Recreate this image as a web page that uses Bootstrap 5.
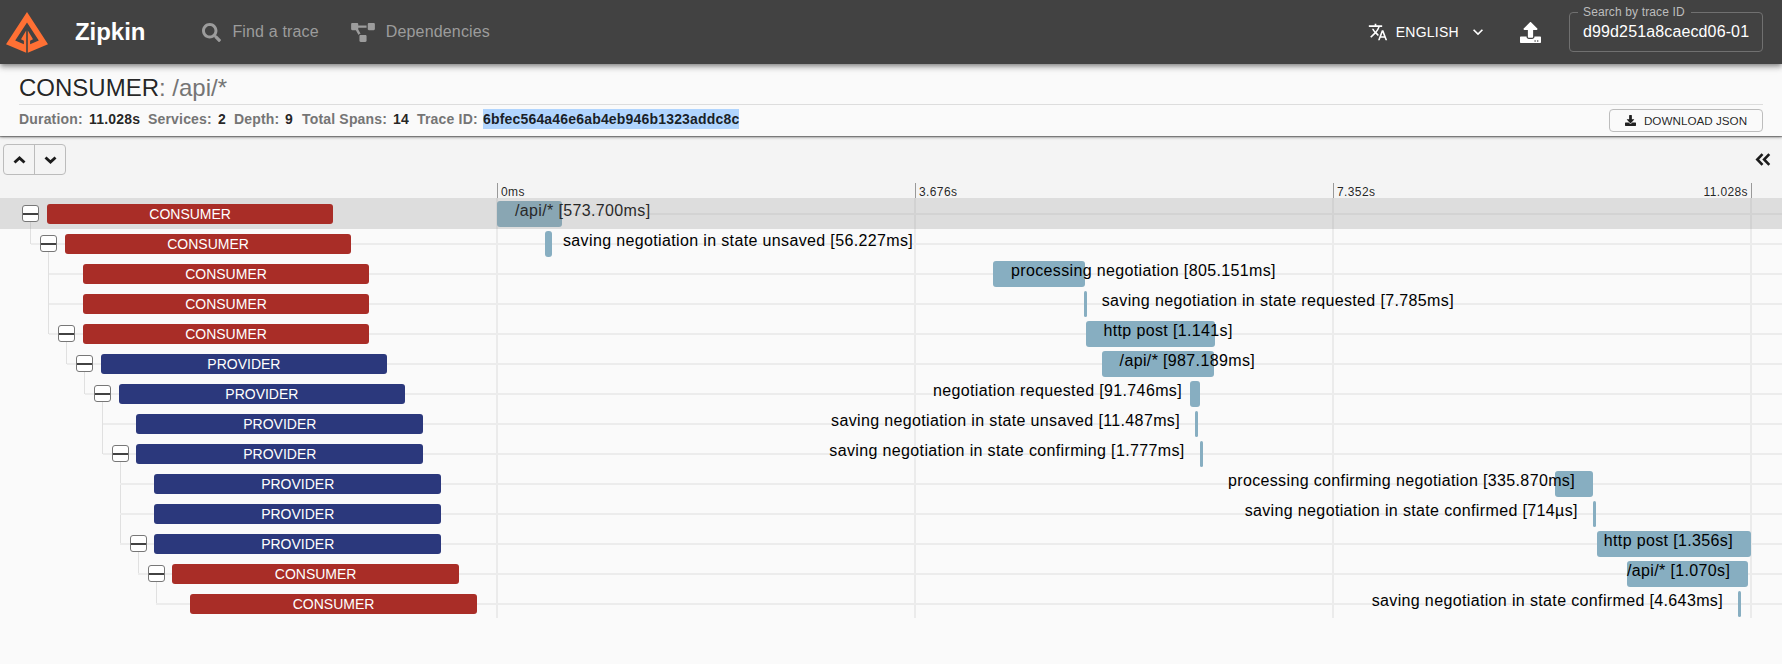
<!DOCTYPE html>
<html lang="en">
<head>
<meta charset="utf-8">
<title>Zipkin</title>
<link href="https://cdn.jsdelivr.net/npm/bootstrap@5.3.0/dist/css/bootstrap.min.css" rel="stylesheet">
<style>
  body { font-family: "Liberation Sans", Arial, sans-serif; background: #fafafa; color: rgba(0,0,0,.87); height: 664px; overflow: hidden; }
  .topbar { height: 64px; background: #424242; color: #fff; box-shadow: 0 2px 4px -1px rgba(0,0,0,.3), 0 4px 5px rgba(0,0,0,.18), 0 1px 10px rgba(0,0,0,.14); position: relative; z-index: 3; padding: 0 19px 0 5px; }
  .brand { font-size: 24px; font-weight: 700; margin-left: 26px; line-height: 64px; letter-spacing: -.05px; }
  .menu-item { color: #9c9c9c; font-size: 16px; letter-spacing: .16px; margin-left: 57px; }
  .lang { font-size: 14px; letter-spacing: .27px; margin: 0 9px 0 8px; }
  .upload { margin: 0 28px 0 32px; }
  .trace-field { width: 194px; height: 40px; border: 1px solid #707070; border-radius: 4px; position: relative; padding-left: 13px; font-size: 16px; letter-spacing: .13px; line-height: 38px; white-space: nowrap; }
  .trace-field span { position: absolute; top: -9px; left: 8px; background: #424242; padding: 0 6px 0 5px; font-size: 12px; letter-spacing: .13px; line-height: 16px; color: #bdbdbd; }
  .summary { height: 72px; background: #fafafa; padding: 0 19px; position: relative; z-index: 2; box-shadow: 0 1px 3px rgba(0,0,0,.45), 0 1px 1px rgba(0,0,0,.3); }
  .trace-title { height: 41px; border-bottom: 1px solid #ddd; font-size: 24px; line-height: 47px; }
  .trace-title span, .meta b { color: #757575; }
  .meta { font-size: 14px; font-weight: 700; line-height: 20px; letter-spacing: .18px; }
  .picked { background: #b1d5fe; }
  .download { width: 154px; height: 23px; border: 1px solid #bdbdbd; border-radius: 4px; font-size: 11.7px; line-height: 21px; white-space: nowrap; }
  .tools { height: 62px; background: #f4f4f4; }
  .updown { width: 63px; height: 31px; border: 1px solid #bcbcbc; border-radius: 4px; margin: 8px 0 0 3px; }
  .updown div { width: 31px; }
  .updown div + div { border-left: 1px solid #bcbcbc; }
  .axis { margin: 8px 0 0 497px; width: 1255px; height: 15px; font-size: 12px; line-height: 18px; letter-spacing: .38px; }
  .axis div { width: 418px; border-left: 1px solid #999; padding-left: 3px; flex: none; }
  .axis div:last-child { border-right: 1px solid #999; width: 419px; padding-right: 3px; }
  .timeline { padding-top: 1px; }
  .trow { height: 30px; position: relative; --left: calc(30.8px + var(--d) * 17.93px); }
  .trow::before { content: ""; position: absolute; height: 2px; top: 14px; right: 0; left: calc(var(--left) - 17.93px); background: #ececec; }
  .trow.first::before { left: 497px; }
  .trow.first::after { content: ""; position: absolute; inset: -1px 0 0 0; height: 31px; background: rgba(145,145,145,.27); }
  .service { position: absolute; left: calc(var(--left) + 16px); top: 5px; width: 286.700px; height: 20px; border-radius: 3px; color: #fff; background: #a92d27; text-align: center; font-size: 14px; line-height: 20px; z-index: 1; }
  .service.prov { background: #2b387c; }
  .toggler { position: absolute; left: calc(var(--left) - 8.6px); top: 6px; width: 17px; height: 17px; border: 1px solid #777; border-radius: 3px; background: linear-gradient(#424242,#424242) 0 7px/15px 2px no-repeat #fff; z-index: 1; }
  .stem { position: absolute; left: calc(var(--left) - .6px); top: 15px; width: 1px; height: calc(var(--n) * 30px); background: #e0e0e0; }
  .span-bar { position: absolute; top: 2px; height: 26px; left: var(--x); width: var(--w); border-radius: 3px; background: #87aec1; }
  .span-text { position: absolute; top: -1px; line-height: 25px; white-space: nowrap; font-size: 16px; letter-spacing: .36px; color: #000; left: calc(var(--x) + 18px); }
  .span-text.end { left: auto; right: calc(1782px - var(--x) - var(--w) + 18px); }
  .vlines { position: absolute; top: 0; left: 496px; width: 1256px; height: 420px; background: repeating-linear-gradient(90deg, #ebebeb 0 2px, transparent 2px 418px); }
</style>
</head>
<body>
<nav class="topbar d-flex align-items-center">
  <svg width="44" height="42" viewBox="0 0 44 42"><path fill="#ff7034" d="M22 1 1 33.200l20.200 8.500V19.500l-5.200 8.700 2.900 1.500v3.600L10.200 29.500 22 11.500 33.800 29.500 25.100 33.300v-3.600l2.900-1.500-5.200-8.700v22.200L43 33.200z"/></svg>
  <div class="brand">Zipkin</div>
  <div class="menu-item d-flex align-items-center">
    <svg width="19" height="19" viewBox="0 0 512 512" fill="currentColor"><path d="M505 442.700 405.300 343c-4.500-4.500-10.600-7-17-7H372c27.600-35.300 44-79.700 44-128C416 93.100 322.900 0 208 0S0 93.100 0 208s93.100 208 208 208c48.300 0 92.700-16.400 128-44v16.300c0 6.400 2.500 12.500 7 17l99.700 99.700c9.400 9.400 24.600 9.400 33.900 0l28.300-28.300c9.400-9.400 9.400-24.600.1-34zM208 336c-70.700 0-128-57.200-128-128 0-70.700 57.200-128 128-128 70.700 0 128 57.200 128 128 0 70.700-57.200 128-128 128z"/></svg>
    <span style="margin-left:11px">Find a trace</span>
    <svg width="24" height="19" viewBox="0 0 640 512" fill="currentColor" style="margin-left:32px"><path d="M384 320H256c-17.670 0-32 14.330-32 32v128c0 17.670 14.330 32 32 32h128c17.670 0 32-14.330 32-32V352c0-17.670-14.330-32-32-32zM192 32c0-17.670-14.330-32-32-32H32C14.330 0 0 14.330 0 32v128c0 17.670 14.330 32 32 32h95.720l73.160 128.040C211.980 300.980 232.400 288 256 288h.28L192 175.510V128h224V64H192V32zM608 0H480c-17.670 0-32 14.330-32 32v128c0 17.670 14.330 32 32 32h128c17.670 0 32-14.330 32-32V32c0-17.670-14.330-32-32-32z"/></svg>
    <span style="margin-left:11px">Dependencies</span>
  </div>
  <div class="ms-auto d-flex align-items-center">
    <svg width="20" height="20" viewBox="0 0 24 24" fill="#fff"><path d="M12.870 15.070l-2.540-2.510.03-.03c1.740-1.940 2.980-4.170 3.710-6.530H17V4h-7V2H8v2H1v1.990h11.170C11.500 7.920 10.440 9.750 9 11.350 8.070 10.320 7.300 9.190 6.690 8h-2c.73 1.630 1.730 3.170 2.980 4.560l-5.090 5.020L4 19l5-5 3.110 3.110.76-2.040zM18.500 10h-2L12 22h2l1.120-3h4.750L21 22h2l-4.500-12zm-2.620 7l1.620-4.330L19.120 17h-3.240z"/></svg>
    <span class="lang">ENGLISH</span>
    <svg width="20" height="20" viewBox="0 0 24 24" fill="#fff"><path d="M16.590 8.590 12 13.170 7.410 8.590 6 10l6 6 6-6z"/></svg>
    <svg class="upload" width="21" height="21" viewBox="0 0 512 512" fill="#fff"><path d="M296 384h-80c-13.300 0-24-10.700-24-24V192h-87.700c-17.800 0-26.700-21.500-14.100-34.100L242.300 5.700c7.500-7.500 19.800-7.500 27.300 0l152.200 152.200c12.600 12.600 3.700 34.100-14.100 34.100H320v168c0 13.300-10.700 24-24 24zm216-8v112c0 13.300-10.700 24-24 24H24c-13.300 0-24-10.700-24-24V376c0-13.300 10.700-24 24-24h136v8c0 30.900 25.100 56 56 56h80c30.900 0 56-25.100 56-56v-8h136c13.300 0 24 10.700 24 24zm-124 88c0-11-9-20-20-20s-20 9-20 20 9 20 20 20 20-9 20-20zm64 0c0-11-9-20-20-20s-20 9-20 20 9 20 20 20 20-9 20-20z"/></svg>
    <div class="trace-field"><span>Search by trace ID</span>d99d251a8caecd06-01</div>
  </div>
</nav>
<section class="summary">
  <div class="trace-title">CONSUMER<span>: /api/*</span></div>
  <div class="d-flex justify-content-between align-items-start" style="padding-top:4px">
    <div class="meta d-flex">
      <b style="width:70px">Duration:</b><span style="width:59px">11.028s</span>
      <b style="width:70px">Services:</b><span style="width:16px">2</span>
      <b style="width:51px">Depth:</b><span style="width:17px">9</span>
      <b style="width:91px">Total Spans:</b><span style="width:24px">14</span>
      <b style="width:66px">Trace ID:</b><span class="picked">6bfec564a46e6ab4eb946b1323addc8c</span>
    </div>
    <div class="download d-flex align-items-center justify-content-center">
      <svg width="11" height="11" viewBox="0 0 512 512" fill="#212121" style="margin-right:8px"><path d="M216 0h80c13.300 0 24 10.700 24 24v168h87.700c17.800 0 26.700 21.500 14.100 34.100L269.700 378.300c-7.500 7.500-19.800 7.500-27.300 0L90.100 226.100c-12.600-12.600-3.700-34.100 14.100-34.100H192V24c0-13.300 10.700-24 24-24zm296 376v112c0 13.300-10.700 24-24 24H24c-13.300 0-24-10.700-24-24V376c0-13.300 10.700-24 24-24h146.700l49 49c20.100 20.100 52.500 20.100 72.600 0l49-49H488c13.300 0 24 10.700 24 24z"/></svg>DOWNLOAD JSON
    </div>
  </div>
</section>
<section class="tools">
  <div class="d-flex justify-content-between">
    <div class="updown d-flex">
      <div class="d-flex align-items-center justify-content-center"><svg width="13" height="8" viewBox="0 0 13 8"><path d="M1.500 6.500l5-4.500 5 4.500" fill="none" stroke="#1c1c1c" stroke-width="2.900"/></svg></div>
      <div class="d-flex align-items-center justify-content-center"><svg width="13" height="8" viewBox="0 0 13 8"><path d="M1.500 1.500l5 4.500 5-4.500" fill="none" stroke="#1c1c1c" stroke-width="2.900"/></svg></div>
    </div>
    <svg width="16" height="13" viewBox="0 0 16 13" style="margin:17px 11px 0 0"><path d="M7.500 1.200 2.300 6.500l5.200 5.300M14.300 1.200 9.100 6.500l5.200 5.300" fill="none" stroke="#1c1c1c" stroke-width="2.600"/></svg>
  </div>
  <div class="axis d-flex"><div>0ms</div><div>3.676s</div><div class="d-flex justify-content-between"><span>7.352s</span><span>11.028s</span></div></div>
</section>
<main class="timeline position-relative">
  <div class="vlines"></div>
  <div class="trow first" style="--d:0;--x:497px;--w:65px"><i class="stem" style="--n:1"></i><i class="toggler"></i><div class="service">CONSUMER</div><div class="span-bar"></div><div class="span-text">/api/* [573.700ms]</div></div>
  <div class="trow" style="--d:1;--x:545px;--w:7px"><i class="stem" style="--n:3"></i><i class="toggler"></i><div class="service">CONSUMER</div><div class="span-bar"></div><div class="span-text">saving negotiation in state unsaved [56.227ms]</div></div>
  <div class="trow" style="--d:2;--x:993px;--w:91.500px"><div class="service">CONSUMER</div><div class="span-bar"></div><div class="span-text">processing negotiation [805.151ms]</div></div>
  <div class="trow" style="--d:2;--x:1083.700px;--w:3px"><div class="service">CONSUMER</div><div class="span-bar"></div><div class="span-text">saving negotiation in state requested [7.785ms]</div></div>
  <div class="trow" style="--d:2;--x:1085.500px;--w:129.700px"><i class="stem" style="--n:1"></i><i class="toggler"></i><div class="service">CONSUMER</div><div class="span-bar"></div><div class="span-text">http post [1.141s]</div></div>
  <div class="trow" style="--d:3;--x:1101.600px;--w:112.200px"><i class="stem" style="--n:1"></i><i class="toggler"></i><div class="service prov">PROVIDER</div><div class="span-bar"></div><div class="span-text">/api/* [987.189ms]</div></div>
  <div class="trow" style="--d:4;--x:1189.500px;--w:10.500px"><i class="stem" style="--n:2"></i><i class="toggler"></i><div class="service prov">PROVIDER</div><div class="span-bar"></div><div class="span-text end">negotiation requested [91.746ms]</div></div>
  <div class="trow" style="--d:5;--x:1195px;--w:3px"><div class="service prov">PROVIDER</div><div class="span-bar"></div><div class="span-text end">saving negotiation in state unsaved [11.487ms]</div></div>
  <div class="trow" style="--d:5;--x:1199.600px;--w:3px"><i class="stem" style="--n:3"></i><i class="toggler"></i><div class="service prov">PROVIDER</div><div class="span-bar"></div><div class="span-text end">saving negotiation in state confirming [1.777ms]</div></div>
  <div class="trow" style="--d:6;--x:1554.800px;--w:38.200px"><div class="service prov">PROVIDER</div><div class="span-bar"></div><div class="span-text end">processing confirming negotiation [335.870ms]</div></div>
  <div class="trow" style="--d:6;--x:1592.800px;--w:3px"><div class="service prov">PROVIDER</div><div class="span-bar"></div><div class="span-text end">saving negotiation in state confirmed [714µs]</div></div>
  <div class="trow" style="--d:6;--x:1597.200px;--w:153.800px"><i class="stem" style="--n:1"></i><i class="toggler"></i><div class="service prov">PROVIDER</div><div class="span-bar"></div><div class="span-text end">http post [1.356s]</div></div>
  <div class="trow" style="--d:7;--x:1626.600px;--w:121.600px"><i class="stem" style="--n:1"></i><i class="toggler"></i><div class="service">CONSUMER</div><div class="span-bar"></div><div class="span-text end">/api/* [1.070s]</div></div>
  <div class="trow" style="--d:8;--x:1738px;--w:3px"><div class="service">CONSUMER</div><div class="span-bar"></div><div class="span-text end">saving negotiation in state confirmed [4.643ms]</div></div>
</main>
<script src="https://cdn.jsdelivr.net/npm/bootstrap@5.3.0/dist/js/bootstrap.bundle.min.js"></script>
</body>
</html>
